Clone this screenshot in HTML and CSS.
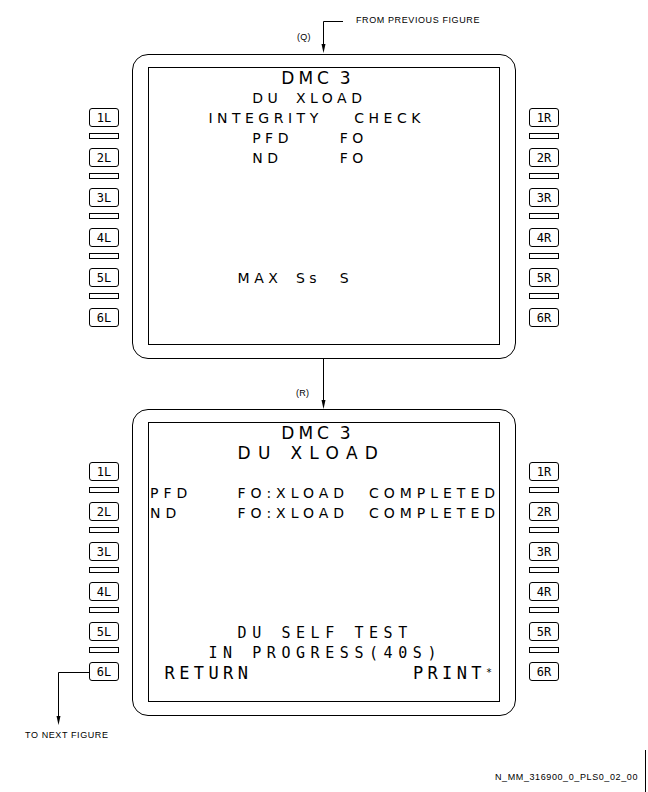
FILE: index.html
```html
<!DOCTYPE html>
<html lang="en">
<head>
    <meta charset="UTF-8">
    <title>DMC 3 DU XLOAD</title>
    <link rel="stylesheet" href="styles.css">
</head>
<body>
    <div class="page">
        <div class="lead-in">
            <svg class="wire" width="648" height="54">
                <polyline points="343,21.5 323.5,21.5 323.5,46" fill="none" stroke="#000" stroke-width="1"/>
                <polygon points="321.5,44 325.5,44 323.5,53" fill="#000"/>
            </svg>
            <span class="note from">FROM PREVIOUS FIGURE</span>
            <span class="note tag-q">(Q)</span>
        </div>

        <div class="unit unit-top">
            <div class="keys">
                <div class="key">1L</div><div class="bar"></div>
                <div class="key">2L</div><div class="bar"></div>
                <div class="key">3L</div><div class="bar"></div>
                <div class="key">4L</div><div class="bar"></div>
                <div class="key">5L</div><div class="bar"></div>
                <div class="key">6L</div>
            </div>
            <div class="bezel">
                <div class="screen">
                    <div class="ln big"><span class="c9">DMC</span><span class="c13">3</span></div>
                    <div class="ln"><span class="c7">DU</span><span class="c10">XLOAD</span></div>
                    <div class="ln"><span class="c4">INTEGRITY</span><span class="c14">CHECK</span></div>
                    <div class="ln"><span class="c7">PFD</span><span class="c13">FO</span></div>
                    <div class="ln"><span class="c7">ND</span><span class="c13">FO</span></div>
                    <div class="ln"></div>
                    <div class="ln"></div>
                    <div class="ln"></div>
                    <div class="ln"></div>
                    <div class="ln"></div>
                    <div class="ln"><span class="c6">MAX</span><span class="c10">Ss</span><span class="c13">S</span></div>
                </div>
            </div>
            <div class="keys">
                <div class="key">1R</div><div class="bar"></div>
                <div class="key">2R</div><div class="bar"></div>
                <div class="key">3R</div><div class="bar"></div>
                <div class="key">4R</div><div class="bar"></div>
                <div class="key">5R</div><div class="bar"></div>
                <div class="key">6R</div>
            </div>
        </div>

        <div class="link">
            <svg class="wire" width="648" height="50">
                <line x1="323.5" y1="0" x2="323.5" y2="43" stroke="#000" stroke-width="1"/>
                <polygon points="321.5,41 325.5,41 323.5,50" fill="#000"/>
            </svg>
            <span class="note tag-r">(R)</span>
        </div>

        <div class="unit unit-bottom">
            <div class="keys">
                <div class="key">1L</div><div class="bar"></div>
                <div class="key">2L</div><div class="bar"></div>
                <div class="key">3L</div><div class="bar"></div>
                <div class="key">4L</div><div class="bar"></div>
                <div class="key">5L</div><div class="bar"></div>
                <div class="key">6L</div>
            </div>
            <div class="bezel">
                <div class="screen tall">
                    <div class="ln big"><span class="c9">DMC</span><span class="c13">3</span></div>
                    <div class="ln big"><span class="c6 wide">DU XLOAD</span></div>
                    <div class="ln"></div>
                    <div class="ln status"><span class="c0">PFD</span><span class="c6">FO:XLOAD</span><span class="c15">COMPLETED</span></div>
                    <div class="ln status"><span class="c0">ND</span><span class="c6">FO:XLOAD</span><span class="c15">COMPLETED</span></div>
                    <div class="ln"></div>
                    <div class="ln"></div>
                    <div class="ln"></div>
                    <div class="ln"></div>
                    <div class="ln"></div>
                    <div class="ln mono">      DU SELF TEST</div>
                    <div class="ln mono">    IN PROGRESS(40S)</div>
                    <div class="ln mono big"> RETURN           PRINT<span class="star">*</span></div>
                </div>
            </div>
            <div class="keys">
                <div class="key">1R</div><div class="bar"></div>
                <div class="key">2R</div><div class="bar"></div>
                <div class="key">3R</div><div class="bar"></div>
                <div class="key">4R</div><div class="bar"></div>
                <div class="key">5R</div><div class="bar"></div>
                <div class="key">6R</div>
            </div>
        </div>

        <!-- connector leaving 6L of the lower unit -->
        <div class="lead-out">
            <svg class="wire" width="40" height="70">
                <polyline points="35,0.5 4.5,0.5 4.5,46" fill="none" stroke="#000" stroke-width="1"/>
                <polygon points="2.5,44 6.5,44 4.5,53" fill="#000"/>
            </svg>
            <span class="note to">TO NEXT FIGURE</span>
        </div>

        <div class="caption">N_MM_316900_0_PLS0_02_00</div>
        <div class="edge"></div>
    </div>
</body>
</html>
```

FILE: styles.css
```css
body {
    margin: 0;
    background-color: #fff;
    color: #000;
}
.page {
    position: relative;
    width: 648px;
    height: 792px;
    overflow: hidden;
}
.wire {
    display: block;
}
.note {
    position: absolute;
    font-family: "Liberation Sans", Arial, sans-serif;
    font-size: 9px;
    line-height: 10px;
    letter-spacing: 0.6px;
    white-space: nowrap;
}
.lead-in {
    position: relative;
    height: 54px;
}
.from {
    left: 356px;
    top: 15px;
}
.tag-q {
    left: 297px;
    top: 32px;
    letter-spacing: 0.3px;
}
.link {
    position: relative;
    height: 50px;
}
.tag-r {
    left: 296px;
    top: 29px;
    letter-spacing: 0.3px;
}
.unit {
    display: flex;
    align-items: flex-start;
    gap: 13px;
    padding-left: 89px;
}
.keys {
    display: flex;
    flex-direction: column;
    width: 30px;
}
.unit-top .keys {
    padding-top: 54px;
}
.unit-bottom .keys {
    padding-top: 53px;
}
.key {
    box-sizing: border-box;
    height: 19px;
    border: 1px solid #000;
    border-radius: 3px;
    display: flex;
    align-items: center;
    justify-content: center;
    font-family: "DejaVu Sans Mono", monospace;
    font-size: 12px;
}
.bar {
    box-sizing: border-box;
    height: 6px;
    margin: 6px 0 9px;
    border: 1px solid #000;
}
.bezel {
    box-sizing: border-box;
    width: 384px;
    border: 1px solid #000;
    border-radius: 16px;
    padding: 12px 15px 13px;
}
.screen {
    box-sizing: border-box;
    height: 278px;
    border: 1px solid #000;
    padding: 0 1px;
}
.screen.tall {
    height: 280px;
}

/* 24 character columns across the display */
.ln {
    display: grid;
    grid-template-columns: repeat(24, 14.6px);
    height: 20px;
    line-height: 20px;
    white-space: pre;
    font-family: "DejaVu Sans", sans-serif;
    font-size: 14px;
    letter-spacing: 4.5px;
}
.ln span {
    grid-row: 1;
}
.ln.status {
    letter-spacing: 5px;
}
.ln.big {
    font-size: 17px;
    letter-spacing: 4px;
}
.ln .wide {
    letter-spacing: 7.3px;
}
.ln.mono {
    display: block;
    font-family: "DejaVu Sans Mono", monospace;
    font-size: 15px;
    letter-spacing: 5.57px;
}
.ln.mono.big {
    font-size: 17px;
    letter-spacing: 4.37px;
}
.c0 { grid-column-start: 1; }
.c4 { grid-column-start: 5; }
.c6 { grid-column-start: 7; }
.c7 { grid-column-start: 8; }
.c9 { grid-column-start: 10; }
.c10 { grid-column-start: 11; }
.c13 { grid-column-start: 14; }
.c14 { grid-column-start: 15; }
.c15 { grid-column-start: 16; }
.star {
    font-size: 10px;
    vertical-align: 3px;
    letter-spacing: 0;
}
.lead-out {
    position: absolute;
    left: 54px;
    top: 672px;
}
.to {
    left: -29px;
    top: 58px;
}
.caption {
    position: absolute;
    right: 10px;
    top: 771px;
    font-family: "Liberation Sans", Arial, sans-serif;
    font-size: 9px;
    line-height: 12px;
    letter-spacing: 0.6px;
}
.edge {
    position: absolute;
    left: 645px;
    top: 750px;
    width: 1px;
    height: 42px;
    background-color: #000;
}
```
